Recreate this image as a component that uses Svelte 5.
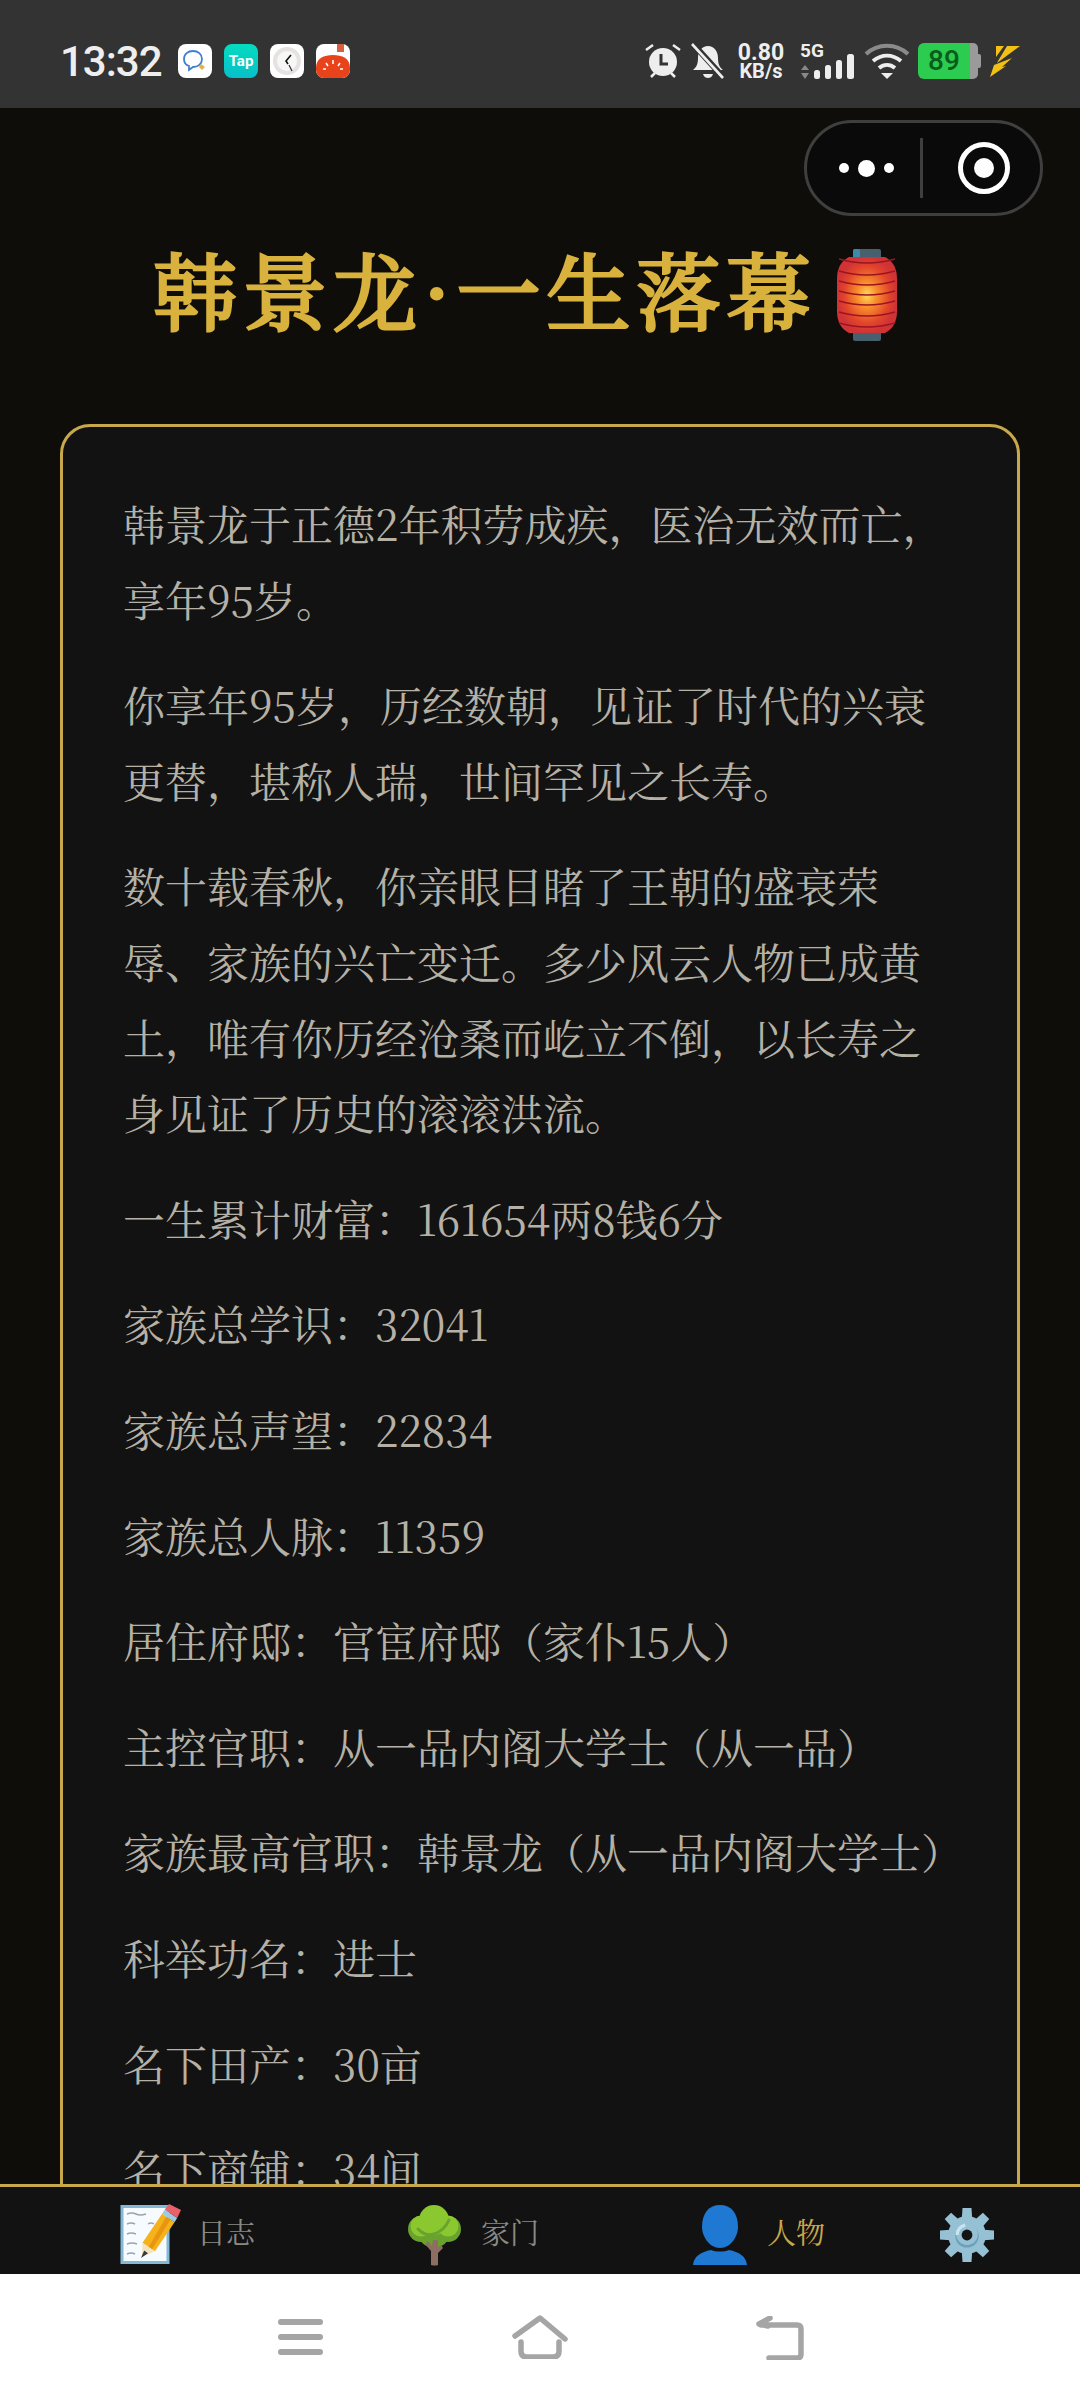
<script>
  const c = '\uFF0C';
  const k = '\uFF1A';
  const l = '\uFF08';
  const r = '\uFF09';
  const paras = [
    `韩景龙于正德2年积劳成疾${c}医治无效而亡${c}享年95岁。`,
    `你享年95岁${c}历经数朝${c}见证了时代的兴衰更替${c}堪称人瑞${c}世间罕见之长寿。`,
    `数十载春秋${c}你亲眼目睹了王朝的盛衰荣辱、家族的兴亡变迁。多少风云人物已成黄土${c}唯有你历经沧桑而屹立不倒${c}以长寿之身见证了历史的滚滚洪流。`,
    `一生累计财富${k}161654两8钱6分`,
    `家族总学识${k}32041`,
    `家族总声望${k}22834`,
    `家族总人脉${k}11359`,
    `居住府邸${k}官宦府邸${l}家仆15人${r}`,
    `主控官职${k}从一品内阁大学士${l}从一品${r}`,
    `家族最高官职${k}韩景龙${l}从一品内阁大学士${r}`,
    `科举功名${k}进士`,
    `名下田产${k}30亩`,
    `名下商铺${k}34间`
  ];
  const teeth = [0, 45, 90, 135, 180, 225, 270, 315];
  const ribs = [14, 26, 36, 46, 56, 67, 78];
</script>

<div class="phone">
  <header class="status">
    <span class="time">13:32</span>
    <div class="apps">
      <svg class="app" viewBox="0 0 34 34"><rect width="34" height="34" rx="8" fill="#fff"/><path d="M6 15c0-5 4-8 9-8s9 3 9 8-4 8-9 8l-4 3v-4c-3-1-5-4-5-7z" fill="none" stroke="#3f7fd0" stroke-width="1.8"/><path d="M23 20l4 3-3 3-3-3z" fill="#e2b23a"/></svg>
      <div class="app tap">Tap</div>
      <svg class="app" viewBox="0 0 34 34"><rect width="34" height="34" rx="8" fill="#fff"/><circle cx="17" cy="17" r="14" fill="#e6e2e2"/><circle cx="17" cy="17" r="10" fill="#f8f7f7"/><path d="M21 11l-5 6 2 3" fill="none" stroke="#111" stroke-width="1.6"/><path d="M19 21l3 6" stroke="#333" stroke-width="1.2"/></svg>
      <svg class="app" viewBox="0 0 34 34"><rect width="34" height="34" rx="8" fill="#fff"/><path d="M0 24C0 14 8 11 17 11s17 3 17 13v2a8 8 0 0 1-8 8H8a8 8 0 0 1-8-8z" fill="#e8431a"/><rect x="21" y="0" width="7" height="8" fill="#d8603e"/><path d="M17 16v4M10 19l2 3M24 19l-2 3M7 25h3M24 25h3" stroke="#fff" stroke-width="1.6"/></svg>
    </div>
    <div class="sys">
      <svg class="alarm" viewBox="0 0 36 36"><circle cx="18" cy="19" r="14" fill="#eee"/><path d="M1 7l7-5M35 7l-7-5M6 34l4-4M30 34l-4-4" stroke="#eee" stroke-width="2.5"/><path d="M16 11v10h7" fill="none" stroke="#333" stroke-width="3"/></svg>
      <svg class="bell" viewBox="0 0 34 36"><path d="M2 27c4-3 5-7 5-12 0-7 4-12 10-12s10 5 10 12c0 5 1 9 5 12z" fill="#eee"/><path d="M12 31h10c-1 3-3 4-5 4s-4-1-5-4z" fill="#eee"/><path d="M3 2l29 32" stroke="#333" stroke-width="6"/><path d="M1 1l31 34" stroke="#eee" stroke-width="2.6"/></svg>
      <div class="speed"><b>0.80</b><b class="unit">KB/s</b></div>
      <div class="cell">
        <b class="five">5G</b>
        <svg class="bars" viewBox="0 0 54 36"><path d="M5 22l4 5H1zM5 36l-4-6h8z" fill="#888"/><rect x="14" y="27" width="6" height="9" rx="2.5" fill="#eee"/><rect x="25" y="22" width="6" height="14" rx="2.5" fill="#eee"/><rect x="36" y="17" width="6" height="19" rx="2.5" fill="#eee"/><rect x="47" y="11" width="7" height="25" rx="2.5" fill="#eee"/></svg>
      </div>
      <svg class="wifi" viewBox="0 0 46 36"><path d="M2 11c12-11 30-11 42 0" fill="none" stroke="#8a8a8a" stroke-width="4"/><path d="M9 18c9-7 19-7 28 0" fill="none" stroke="#eee" stroke-width="4"/><path d="M15 25c5-4 11-4 16 0" fill="none" stroke="#eee" stroke-width="4"/><path d="M17 30h12l-6 6z" fill="#eee"/></svg>
      <div class="battery"><div class="level">89</div><div class="rest"></div><div class="tip"></div></div>
      <svg class="bolt" viewBox="0 0 30 32"><path d="M6 1h8L6 12zM17 1h13L7 18l1-2zM4 20l18-7-10 9 4-1L0 32z" fill="#f2c116"/></svg>
    </div>
  </header>

  <div class="capsule">
    <div class="dots"><i></i><i class="big"></i><i></i></div>
    <div class="sep"></div>
    <div class="target"><i></i></div>
  </div>

  <main class="page">
    <h1 class="title">
      <span>韩景龙·一生落幕</span>
      <svg class="lantern" viewBox="0 0 60 92">
        <defs><radialGradient id="lg"><stop offset="0" stop-color="#ffd860"/><stop offset=".3" stop-color="#f9942c"/><stop offset=".75" stop-color="#e2452b"/><stop offset="1" stop-color="#cf3336"/></radialGradient></defs>
        <rect x="16" y="0" width="28" height="12" rx="2" fill="#46606f"/>
        <rect x="16" y="0" width="7" height="12" rx="2" fill="#3d8aa8"/>
        <rect x="16" y="80" width="28" height="12" rx="2" fill="#46606f"/>
        <path d="M12 8H48Q60 14 60 30V62Q60 78 48 84H12Q0 78 0 62V30Q0 14 12 8z" fill="url(#lg)"/>
        {#each ribs as y}
          <path d="M2 {y - 4}Q30 {y + 4} 58 {y - 4}" fill="none" stroke="#9c1420" stroke-width="1.4"/>
        {/each}
      </svg>
    </h1>

    <section class="card">
      {#each paras as p}
        <p>{p}</p>
      {/each}
    </section>
  </main>

  <nav class="tabs">
    <div class="tab">
      <svg class="ico" viewBox="0 0 60 60">
        <rect x="2" y="1.5" width="46" height="56" fill="#f6fbff" stroke="#84b9d6" stroke-width="3"/>
        <path d="M7 9q5-2 9 0t10 0M7 19q4-2 8 0M28 19q3-2 6 0M7 29q4-2 9 0M7 39q5-2 10 0M7 49q4-2 8 0" fill="none" stroke="#9aa4ac" stroke-width="1.4"/>
        <path d="M22.5 37.8L42.1 8.8 54.5 17.2 34.9 46.2z" fill="#f6b21a"/>
        <path d="M28.7 42L46.4 11.5 50.5 14.5 32 44.5z" fill="#e8960f"/>
        <path d="M22.5 37.8L34.9 46.2 22 52z" fill="#f5e3bd"/>
        <path d="M24.2 45.5L28 48.3 21 53z" fill="#3a3a3a"/>
        <path d="M42.1 8.8L44.8 4.6 57.2 13 54.5 17.2z" fill="#9ccbe0"/>
        <path d="M44.8 4.6L49 -1 61 5 57.2 13z" fill="#e9606a"/>
      </svg>
      <span>日志</span>
    </div>
    <div class="tab">
      <svg class="ico" viewBox="0 0 60 60">
        <circle cx="17" cy="24" r="13" fill="#69a22c"/><circle cx="44" cy="24" r="13" fill="#69a22c"/><circle cx="30" cy="27" r="16" fill="#69a22c"/>
        <circle cx="30" cy="15" r="15" fill="#8bc72f"/><circle cx="17" cy="21" r="10.5" fill="#8bc72f"/><circle cx="44" cy="21" r="10.5" fill="#8bc72f"/>
        <path d="M14 24q8 8 16 5 10-3 15-14" fill="none" stroke="#69a22c" stroke-width="3" stroke-linecap="round"/>
        <path d="M27 60V46l-6-7 3-3 4 5 1-6h5v7l3-2 2 3-5 5v12q-3 1-7 0z" fill="#8d6e63"/>
      </svg>
      <span>家门</span>
    </div>
    <div class="tab active">
      <svg class="ico" viewBox="0 0 60 60">
        <path d="M30 0c-11 0-18 8-18 22 0 9 7 21 18 21s18-12 18-21C48 8 41 0 30 0z" fill="#1f78d1"/>
        <path d="M3 60c1-9 8-13 18-15 5 2 13 2 18 0 10 2 17 6 18 15z" fill="#1f78d1"/>
      </svg>
      <span>人物</span>
    </div>
    <div class="tab">
      <svg class="ico gear" viewBox="0 0 60 60">
        {#each teeth as a}
          <path d="M25 0h10l1 15H24z" fill="#96c0d3" transform="rotate({a} 30 30)"/>
        {/each}
        <circle cx="30" cy="30" r="21" fill="#96c0d3"/>
        <circle cx="30" cy="31" r="13" fill="#6da0ba"/>
        <circle cx="30" cy="29" r="12" fill="#96c0d3"/>
        <path d="M19 30a11 11 0 0 1 9-11" fill="none" stroke="#c9e5f1" stroke-width="3.5"/>
        <circle cx="30" cy="30" r="6" fill="#141414"/>
      </svg>
    </div>
  </nav>

  <footer class="nav">
    <svg class="menu" viewBox="0 0 45 36"><path d="M3 3h39M3 18h39M3 33h39" stroke="#a5a5a5" stroke-width="6" stroke-linecap="round"/></svg>
    <svg class="home" viewBox="0 0 56 44"><path d="M3 21L28 3l25 21" fill="none" stroke="#a5a5a5" stroke-width="5.5" stroke-linecap="round" stroke-linejoin="round"/><path d="M9 27v9q0 6 6 6h26q6 0 6-6v-9" fill="none" stroke="#a5a5a5" stroke-width="5.5" stroke-linecap="round"/></svg>
    <svg class="back" viewBox="0 0 48 44"><path d="M14 2L3 8l9 2M5 9h36q4 0 4 4v25q0 4-4 4H13" fill="none" stroke="#a5a5a5" stroke-width="5.5" stroke-linecap="round" stroke-linejoin="round"/></svg>
  </footer>
</div>

<style>
  :global(body) { margin: 0; background: #0f0d09; }
  .phone {
    position: relative; width: 1080px; height: 2400px; overflow: hidden;
    display: flex; flex-direction: column; background: #0f0d09;
    font-family: "Noto Serif CJK SC", "Liberation Serif", "Noto Sans CJK SC", serif;
  }
  .status {
    height: 108px; flex: none; background: #333; display: flex; align-items: center;
    padding: 14px 60px 0; box-sizing: border-box; color: #eee; font-family: Roboto, "Noto Sans", sans-serif;
  }
  .time { font-size: 42px; font-weight: 500; width: 118px; letter-spacing: -1px; }
  .apps { display: flex; gap: 12px; }
  .app { width: 34px; height: 34px; display: block; }
  .tap {
    border-radius: 8px; background: linear-gradient(#04dcc0, #08bfc9); color: #fff;
    font: 700 15px/34px Roboto, sans-serif; text-align: center;
  }
  .sys { margin-left: auto; display: flex; align-items: center; height: 36px; }
  .alarm { width: 36px; height: 36px; margin-right: 10px; }
  .bell { width: 34px; height: 36px; margin-right: 12px; }
  .speed { width: 48px; display: flex; flex-direction: column; align-items: center; margin-right: 15px; }
  .speed b { font-size: 23px; line-height: 19px; font-weight: 700; }
  .speed .unit { font-size: 20px; line-height: 18px; }
  .cell { position: relative; width: 54px; height: 36px; margin-right: 10px; }
  .five { position: absolute; left: 0; top: 0; font-size: 19px; line-height: 16px; font-weight: 700; }
  .bars { position: absolute; left: 0; top: 0; width: 54px; height: 36px; }
  .wifi { width: 46px; height: 36px; margin-right: 8px; }
  .battery { position: relative; display: flex; width: 63px; height: 36px; margin-right: 9px; }
  .level {
    width: 52px; background: #2bcc4f; border-radius: 6px 0 0 6px; color: #0a5c1c;
    font: 500 28px/36px Roboto, sans-serif; text-align: center;
  }
  .rest { width: 8px; background: #9a9a9a; border-radius: 0 5px 5px 0; }
  .tip { width: 3px; height: 14px; margin-top: 11px; background: #9a9a9a; border-radius: 0 2px 2px 0; }
  .bolt { width: 30px; height: 32px; }

  .capsule {
    position: absolute; left: 804px; top: 120px; width: 239px; height: 96px;
    box-sizing: border-box; border: 3px solid #3f3f3f; border-radius: 48px; background: #0a0a0a;
    display: flex; align-items: center;
  }
  .dots { width: 113px; display: flex; align-items: center; justify-content: center; gap: 9px; padding-left: 5px; box-sizing: border-box; }
  .dots i { width: 10px; height: 10px; border-radius: 50%; background: #fff; }
  .dots .big { width: 17px; height: 17px; }
  .sep { width: 3px; height: 60px; background: #3f3f3f; }
  .target {
    margin-left: 35px; width: 52px; height: 52px; box-sizing: border-box; border: 5px solid #fff; border-radius: 50%;
    display: flex; align-items: center; justify-content: center;
  }
  .target i { width: 20px; height: 20px; border-radius: 50%; background: #fff; }

  .page { flex: 1; min-height: 0; overflow: hidden; padding: 0 60px; box-sizing: border-box; }
  .title {
    margin: 0; height: 316px; box-sizing: border-box; padding: 136px 0 0 93px;
    display: flex; align-items: flex-start; gap: 21px;
    color: #d8b23d; font-size: 84px; line-height: 88px; font-weight: 400; letter-spacing: 6px;
    -webkit-text-stroke: 3.2px #d8b23d;
  }
  .lantern { width: 60px; height: 92px; flex: none; margin-top: 5px; }
  .card {
    width: 960px; box-sizing: border-box; padding: 59px 60px 44px; border: 3px solid #c9a84c; border-radius: 30px;
    background: #121212; color: #b5b1a6; font-size: 42px; line-height: 75.6px;
  }
  .card p { margin: 0 0 30px; }

  .tabs {
    flex: none; height: 90px; box-sizing: border-box; border-top: 3px solid #c9a84c; background: #121212;
    display: grid; grid-template-columns: 284px 286px 250px auto; padding: 8px 0 0 120px; align-items: center;
    color: #8a8a84; font-size: 29px;
  }
  .tab { display: flex; align-items: center; gap: 17px; }
  .tab span { margin-bottom: 6px; }
  .ico { width: 60px; height: 60px; flex: none; overflow: visible; }
  .ico.gear { width: 54px; height: 54px; }
  .active { color: #c9a84c; }

  .nav { flex: none; height: 126px; background: #fff; position: relative; }
  .nav svg { position: absolute; }
  .menu { left: 278px; top: 45px; width: 45px; height: 36px; }
  .home { left: 512px; top: 41px; width: 56px; height: 44px; }
  .back { left: 756px; top: 42px; width: 48px; height: 44px; }
</style>
